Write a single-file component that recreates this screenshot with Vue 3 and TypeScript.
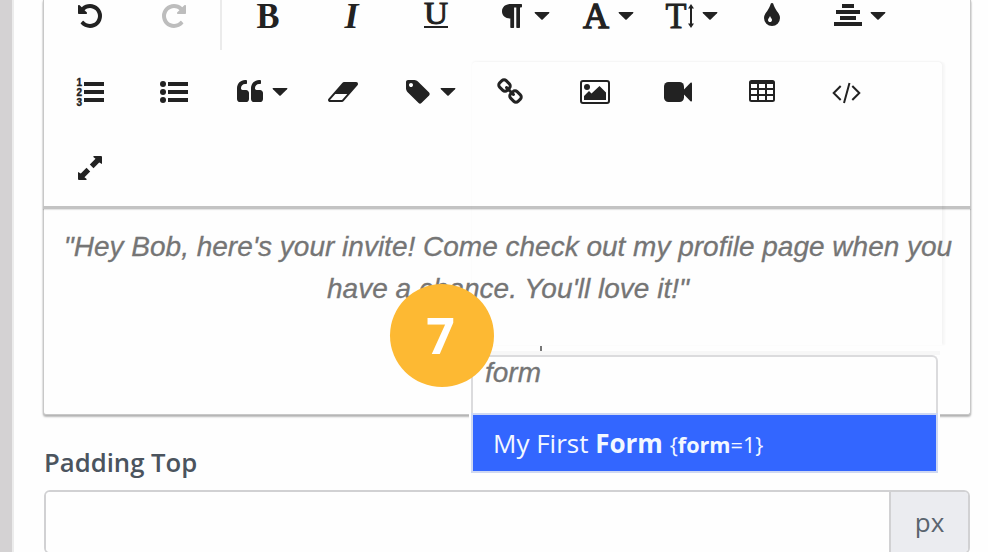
<script setup lang="ts">
interface Tool {
  name: string
  caret?: boolean
  muted?: boolean
  path?: string
  x?: number
}

const undoPath = 'M1664 896q0 156-61 298t-164 245-245 164-298 61q-172 0-327-72.5t-264-204.5q-7-10-6.5-22.5t8.5-20.5l137-138q10-9 25-9 16 2 23 12 73 95 179 147t225 52q104 0 198.5-40.5t163.5-109.5 109.5-163.5 40.5-198.5-40.5-198.5-109.5-163.5-163.5-109.5-198.5-40.5q-98 0-188 35.5t-160 101.5l137 138q31 30 14 69-17 40-59 40h-448q-26 0-45-19t-19-45v-448q0-42 40-59 39-17 69 14l130 129q107-101 244.5-156.5t284.5-55.5q156 0 298 61t245 164 164 245 61 298z'
const quotePath = 'M832 960v384q0 80-56 136t-136 56h-384q-80 0-136-56t-56-136v-704q0-104 40.500-198.500t109.500-163.500 163.500-109.500 198.500-40.500h64q26 0 45 19t19 45v128q0 26-19 45t-45 19h-64q-106 0-181 75t-75 181v32q0 40 28 68t68 28h224q80 0 136 56t56 136zm896 0v384q0 80-56 136t-136 56h-384q-80 0-136-56t-56-136v-704q0-104 40.500-198.500t109.500-163.500 163.500-109.500 198.500-40.500h64q26 0 45 19t19 45v128q0 26-19 45t-45 19h-64q-106 0-181 75t-75 181v32q0 40 28 68t68 28h224q80 0 136 56t56 136z'
const eraserPath = 'M960 1408l336-384h-768l-336 384h768zm1013-1077q15 34 9.5 71.5t-30.5 65.5l-896 1024q-38 44-96 44h-768q-38 0-69.5-20.5t-47.5-54.5q-15-34-9.5-71.5t30.5-65.5l896-1024q38-44 96-44h768q38 0 69.5 20.5t47.5 54.5z'
const tagPath = 'M576 448q0-53-37.5-90.5t-90.5-37.5-90.5 37.5-37.5 90.5 37.5 90.5 90.5 37.5 90.5-37.5 37.5-90.5zm1067 576q0 53-37 90l-491 492q-39 37-91 37-53 0-90-37l-715-716q-38-37-64.5-101t-26.5-117v-416q0-52 38-90t90-38h416q53 0 117 26.5t102 64.5l715 714q37 39 37 91z'
const linkPath = 'M1520 1216q0-40-28-68l-208-208q-28-28-68-28-42 0-72 32 3 3 19 18.5t21.5 21.5 15 19 13 25.5 3.5 27.5q0 40-28 68t-68 28q-15 0-27.5-3.5t-25.5-13-19-15-21.5-21.5-18.5-19q-33 31-33 73 0 40 28 68l206 207q27 27 68 27 40 0 68-26l147-146q28-28 28-67zm-703-705q0-40-28-68l-206-207q-28-28-68-28-39 0-68 27l-147 146q-28 28-28 67 0 40 28 68l208 208q27 27 68 27 42 0 72-31-3-3-19-18.5t-21.5-21.5-15-19-13-25.5-3.5-27.5q0-40 28-68t68-28q15 0 27.5 3.5t25.5 13 19 15 21.5 21.5 18.5 19q33-31 33-73zm895 705q0 120-85 203l-147 146q-83 83-203 83-121 0-204-85l-206-207q-83-83-83-203 0-123 88-209l-88-88q-86 88-208 88-120 0-204-84l-208-208q-84-84-84-204t85-203l147-146q83-83 203-83 121 0 204 85l206 207q83 83 83 203 0 123-88 209l88 88q86-88 208-88 120 0 204 84l208 208q84 84 84 204z'
const dropPath = 'M896 1152q0-36-20-69-1-1-15.500-22.500t-25.500-38-25-44-21-50.500q-4-16-21-16t-21 16q-7 23-21 50.500t-25 44-25.500 38-15.500 22.500q-20 33-20 69 0 53 37.500 90.500t90.500 37.500 90.500-37.500 37.500-90.500zm512-128q0 212-150 362t-362 150-362-150-150-362q0-145 81-275 6-9 62.500-90.500t101-151 99.500-178 83-201.500q9-30 34-47t51-17 51.500 17 33.500 47q28 93 83 201.500t99.500 178 101 151 62.500 90.500q81 127 81 275z'

const rows: Tool[][] = [
  [
    { name: 'undo', path: undoPath },
    { name: 'redo', path: undoPath, muted: true },
    { name: 'divider' },
    { name: 'bold' },
    { name: 'italic' },
    { name: 'underline' },
    { name: 'paragraph', caret: true },
    { name: 'font', caret: true },
    { name: 'size', caret: true },
    { name: 'color', path: dropPath },
    { name: 'align', caret: true },
  ],
  [
    { name: 'ordered' },
    { name: 'unordered' },
    { name: 'quote', caret: true, path: quotePath, x: 20 },
    { name: 'eraser', path: eraserPath, x: 27 },
    { name: 'tag', caret: true, path: tagPath, x: 20 },
    { name: 'link', path: linkPath },
    { name: 'image' },
    { name: 'video' },
    { name: 'table' },
    { name: 'code' },
  ],
  [{ name: 'expand' }],
]
</script>

<template>
  <main class="page">
    <div class="rail"></div>
    <div class="content">
      <section class="editor">
        <div class="toolbar">
          <div v-for="(row, r) in rows" :key="r" class="tools">
            <template v-for="tool in row" :key="tool.name">
              <span v-if="tool.name === 'divider'" class="divider"></span>
              <svg v-else class="tool" :class="{ muted: tool.muted }" width="84" height="76" viewBox="0 0 84 76">
                <g v-if="tool.name === 'redo'" transform="translate(84 0) scale(-1 1)">
                  <path :d="tool.path" transform="translate(28 24) scale(0.015625)" />
                </g>
                <path v-else-if="tool.path" :d="tool.path" :transform="`translate(${tool.x ?? 28} 24) scale(0.015625)`" />
                <text v-else-if="tool.name === 'bold'" class="glyph" x="30.500" y="50" textLength="23" lengthAdjust="spacingAndGlyphs">B</text>
                <text v-else-if="tool.name === 'italic'" class="glyph slanted" x="34.500" y="50">I</text>
                <g v-else-if="tool.name === 'underline'">
                  <text class="glyph under" x="30" y="46" textLength="24" lengthAdjust="spacingAndGlyphs">U</text>
                  <rect x="30" y="48" width="24" height="2" />
                </g>
                <path v-else-if="tool.name === 'paragraph'" fill-rule="evenodd" d="M33 26H43.300Q44 26 44 26.700V28.500Q44 29.500 43 29.500H42V49.200Q42 50 41.200 50H39Q38.300 50 38.300 49.200V29.500H36.100V49.200Q36.100 50 35.400 50H33Q32.300 50 32.300 49.200V40.600C27.500 40.400 24 37.600 24 33.500C24 28.500 28 26 33 26Z" />
                <text v-else-if="tool.name === 'font'" class="glyph roman heavy" x="21" y="50">A</text>
                <g v-else-if="tool.name === 'size'">
                  <text class="glyph roman" x="19.500" y="50" textLength="21" lengthAdjust="spacingAndGlyphs">T</text>
                  <path d="M42 30.500L45 26L48 30.500H46V45.500H48L45 50L42 45.500H44V30.500Z" />
                </g>
                <path v-else-if="tool.name === 'align'" class="bars" d="M28 28H40M22 34H46M26 40H42M20 46H48" />
                <g v-else-if="tool.name === 'ordered'">
                  <path class="bars" d="M36 30H56M36 38H56M36 46H56" />
                  <text class="number" x="28.500" y="32">1</text>
                  <text class="number" x="28.500" y="42">2</text>
                  <text class="number" x="28.500" y="52">3</text>
                </g>
                <g v-else-if="tool.name === 'unordered'">
                  <circle cx="31" cy="30" r="3" />
                  <circle cx="31" cy="38" r="3" />
                  <circle cx="31" cy="46" r="3" />
                  <path class="bars" d="M36 30H56M36 38H56M36 46H56" />
                </g>
                <g v-else-if="tool.name === 'image'">
                  <rect class="line" x="29" y="27" width="28" height="22" rx="2" />
                  <circle cx="35" cy="33" r="3" />
                  <path d="M32 46V42L37 37L39.500 39.500L47.500 32L54 38.500V46Z" />
                </g>
                <g v-else-if="tool.name === 'video'">
                  <rect x="28" y="28" width="20" height="20" rx="4.500" />
                  <path d="M47.500 36L54.500 28.700Q56 28 56 29.500V46.500Q56 48 54.500 47.300L47.500 40Z" />
                </g>
                <path v-else-if="tool.name === 'table'" fill-rule="evenodd" d="M31.500 26H52.500Q55 26 55 28.500V45.500Q55 48 52.500 48H31.500Q29 48 29 45.500V28.500Q29 26 31.500 26ZM31 30V34H37V30ZM39 30V34H45V30ZM47 30V34H53V30ZM31 36V40H37V36ZM39 36V40H45V36ZM47 36V40H53V36ZM31 42V46H37V42ZM39 42V46H45V42ZM47 42V46H53V42Z" />
                <path v-else-if="tool.name === 'code'" class="line" d="M36.700 32L29.700 39L36.700 46M48.300 32L55.300 39L48.300 46M45.500 29L40 49" />
                <g v-else-if="tool.name === 'expand'">
                  <path d="M46 26H53Q54 26 54 27V34L51.200 32.500L45.500 38.200L41.800 34.500L47.500 28.800L45.300 27Q45.200 26 46 26Z" />
                  <path d="M38 50H31Q30 50 30 49V42L32.800 43.500L38.500 37.800L42.200 41.500L36.500 47.200L38.700 49Q38.800 50 38 50Z" />
                  <path class="gap" d="M37 33L47 43" />
                </g>
                <path v-if="tool.caret" d="M57 34H71Q72 34.300 71 35.300L64.700 41.500Q64 42 63.300 41.500L57 35.300Q56 34.300 57 34Z" />
              </svg>
            </template>
          </div>
        </div>
        <div class="body">
          <p>"Hey Bob, here's your invite! Come check out my profile page when you</p>
          <p>have a chance. You'll love it!"</p>
        </div>
      </section>
      <label class="label" for="padding-top">Padding Top</label>
      <div class="field">
        <input id="padding-top" class="input" type="text" />
        <span class="unit">px</span>
      </div>
    </div>
    <div class="ghost"></div>
    <span class="tick"></span>
    <div class="dropdown">
      <div class="query">form</div>
      <div class="option">My First <b>Form</b> <small>{<b>form</b>=1}</small></div>
    </div>
    <div class="step">7</div>
  </main>
</template>

<style>
body {
  margin: 0;
  overflow: hidden;
}
</style>

<style scoped>
.page {
  position: relative;
  display: flex;
  width: 988px;
  height: 552px;
  overflow: hidden;
  background: #fefefe;
  font-family: "Open Sans", sans-serif;
}
.rail {
  flex: none;
  box-sizing: border-box;
  width: 14px;
  background: #d4d2d3;
  border-right: 2px solid #ececec;
}
.content {
  flex: none;
  width: 930px;
  margin-left: 28px;
}
.editor {
  box-sizing: border-box;
  height: 415px;
  margin: 0 0 0 1px;
  width: 928px;
  border: 1px solid #c8c8c8;
  border-top: 0;
  border-radius: 0 0 3px 3px;
  background: #fefefe;
  box-shadow: 0 2px 2px rgba(0, 0, 0, 0.27), 0 0 2px rgba(0, 0, 0, 0.15);
}
.toolbar {
  box-sizing: border-box;
  height: 209px;
  margin: 0 -1px;
  padding: 0 0 0 5px;
  border-bottom: 3px solid #c3c3c3;
  box-shadow: 0 1px 1px rgba(0, 0, 0, 0.1);
}
.tools {
  display: flex;
  height: 76px;
}
.tools:first-child {
  height: 54px;
  align-items: flex-end;
}
.tool {
  flex: none;
  display: block;
  fill: #222;
}
.muted {
  fill: #bdbdbd;
}
.divider {
  flex: none;
  width: 2px;
  height: 50px;
  margin: 0 4px 4px;
  background: #ebebeb;
}
.glyph {
  font: bold 36px "Liberation Serif", serif;
}
.slanted {
  font-style: italic;
}
.under {
  font-size: 31px;
  font-weight: 400;
  stroke: #222;
  stroke-width: 1px;
}
.roman {
  font-weight: 400;
  stroke: #222;
  stroke-width: 0.9px;
}
.heavy {
  stroke-width: 1.3px;
}
.number {
  font: bold 10px/1 "Liberation Sans", sans-serif;
  stroke: #222;
  stroke-width: 0.4px;
}
.bars {
  fill: none;
  stroke: #222;
  stroke-width: 4;
}
.line {
  fill: none;
  stroke: #222;
  stroke-width: 2;
}
.gap {
  stroke: #fefefe;
  stroke-width: 3;
}
.body {
  padding-top: 17px;
  color: #757575;
  font: italic 28px/42px "Liberation Sans", sans-serif;
  -webkit-text-stroke: 0.3px #757575;
  text-align: center;
  white-space: nowrap;
}
.body p {
  margin: 0 0 0 2px;
}
.label {
  display: block;
  height: 40px;
  margin: 28px 0 7px 2px;
  color: #4b545e;
  font-size: 25.700px;
  font-weight: 600;
  line-height: 40px;
}
.field {
  display: flex;
  box-sizing: border-box;
  width: 926px;
  height: 64px;
  margin-left: 2px;
  border: 2px solid #d1d1d3;
  border-radius: 6px;
  overflow: hidden;
}
.input {
  flex: 1;
  min-width: 0;
  padding: 0 16px;
  border: 0;
  background: #fefefe;
  font: 26px "Open Sans", sans-serif;
}
.unit {
  box-sizing: border-box;
  width: 79px;
  border-left: 2px solid #d1d1d3;
  background: #ebecf0;
  color: #5a646e;
  font-size: 26px;
  line-height: 60px;
  text-align: center;
}
.ghost {
  position: absolute;
  left: 472px;
  top: 62px;
  width: 470px;
  height: 283px;
  border-radius: 4px 4px 0 0;
  box-shadow: 0 -1px 2px rgba(0, 0, 0, 0.035), 3px 0 2px rgba(0, 0, 0, 0.03);
}
.tick {
  position: absolute;
  left: 540px;
  top: 346px;
  width: 2px;
  height: 5px;
  background: #777;
}
.dropdown {
  position: absolute;
  left: 469px;
  top: 351px;
  box-sizing: border-box;
  width: 471px;
  height: 123px;
  padding: 4px 2px 0;
  background: linear-gradient(#f7f7f7 0 4px, #fefefe 4px);
}
.query {
  box-sizing: border-box;
  height: 58px;
  padding-left: 12px;
  border: 2px solid #dbdbdd;
  border-bottom: 0;
  border-radius: 0 6px 0 0;
  background: #fefefe;
  color: #757575;
  font: italic 28px/31px "Liberation Sans", sans-serif;
  -webkit-text-stroke: 0.3px #757575;
}
.option {
  box-sizing: border-box;
  height: 60px;
  padding-left: 20px;
  border: 2px solid #cfd8f2;
  background: #36f;
  color: #f3f8ff;
  font-size: 26px;
  line-height: 56px;
  white-space: pre;
}
.option small {
  font-size: 21.600px;
}
.step {
  position: absolute;
  left: 390px;
  top: 284px;
  width: 104px;
  height: 103px;
  border-radius: 50%;
  background: #fdb933;
  color: #fff;
  font-size: 50px;
  font-weight: 700;
  line-height: 102px;
  text-align: center;
  text-indent: -3px;
}
</style>
